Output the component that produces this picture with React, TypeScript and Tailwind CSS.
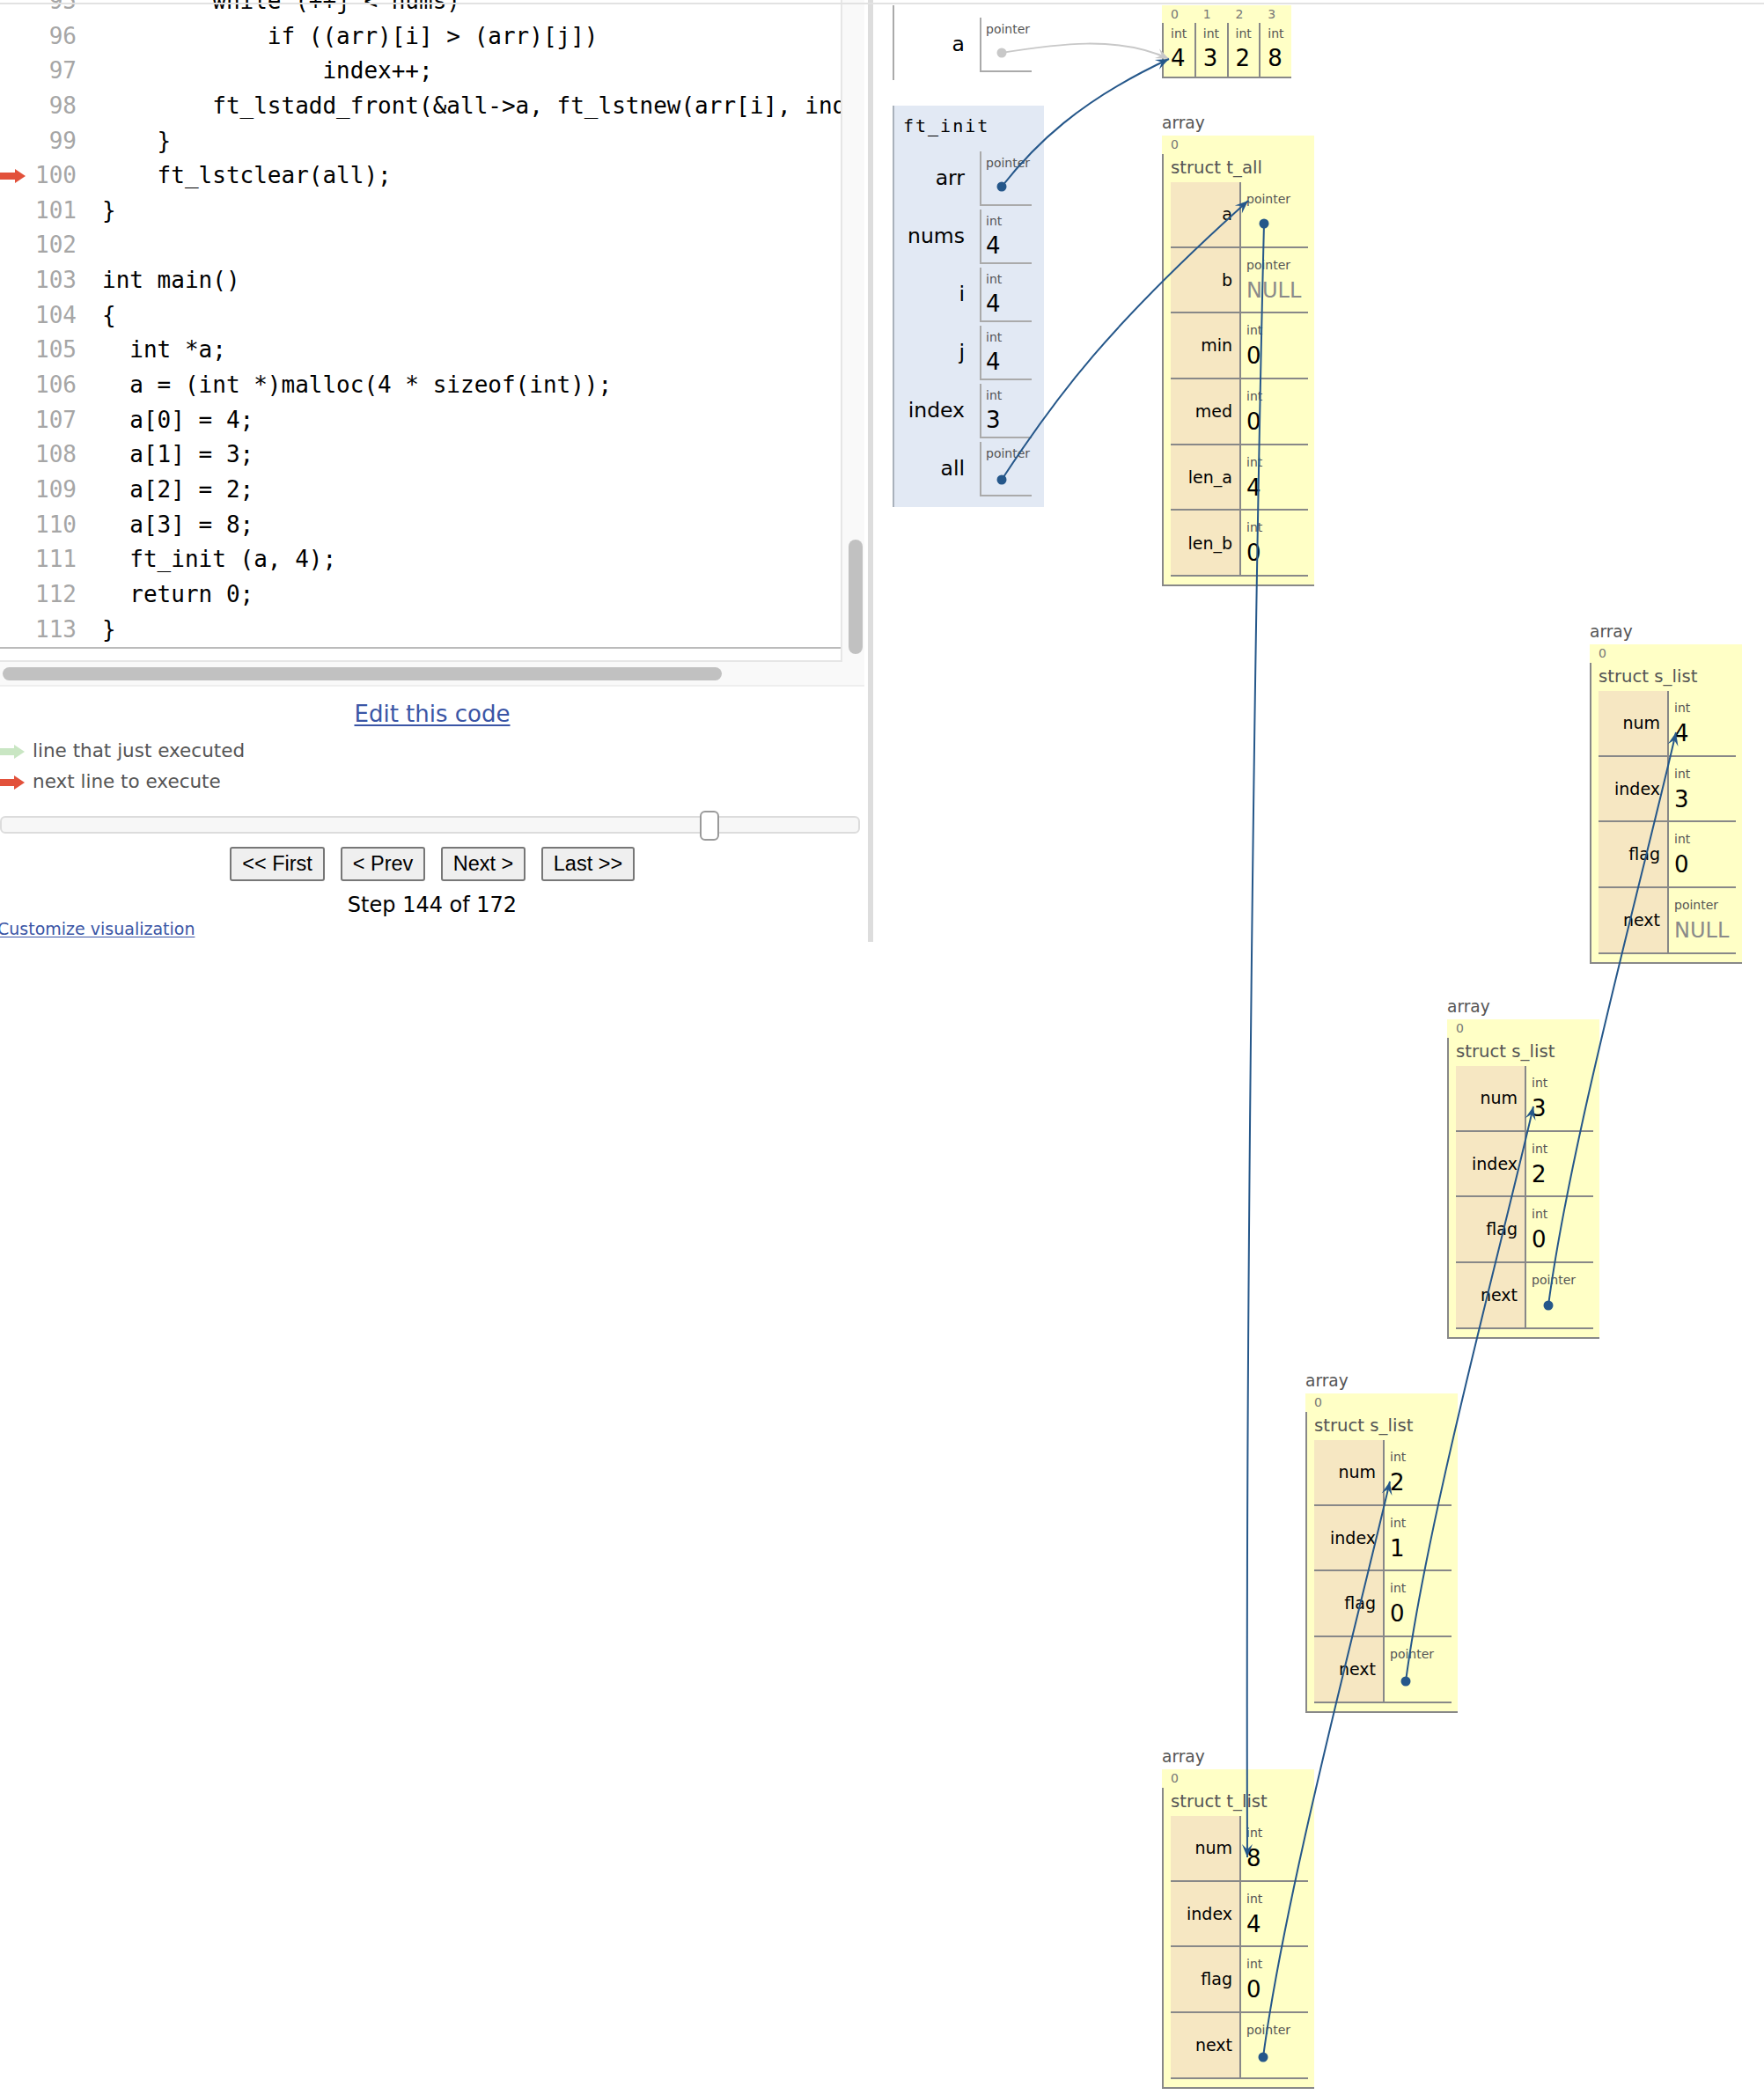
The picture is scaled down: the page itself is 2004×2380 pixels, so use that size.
import React from 'react';

const sans = "font-['DejaVu_Sans',Verdana,sans-serif]";
const mono = "font-['DejaVu_Sans_Mono',monospace]";
const BLUE = '#25578a';

const codeLines: [number, string][] = [
  [95, '        while (++j < nums)'],
  [96, '            if ((arr)[i] > (arr)[j])'],
  [97, '                index++;'],
  [98, '        ft_lstadd_front(&all->a, ft_lstnew(arr[i], index));'],
  [99, '    }'],
  [100, '    ft_lstclear(all);'],
  [101, '}'],
  [102, ''],
  [103, 'int main()'],
  [104, '{'],
  [105, '  int *a;'],
  [106, '  a = (int *)malloc(4 * sizeof(int));'],
  [107, '  a[0] = 4;'],
  [108, '  a[1] = 3;'],
  [109, '  a[2] = 2;'],
  [110, '  a[3] = 8;'],
  [111, '  ft_init (a, 4);'],
  [112, '  return 0;'],
  [113, '}'],
];

type Pt = [number, number];

const arrows: { p: [Pt, Pt, Pt, Pt]; c: string }[] = [
  { p: [[1138, 60], [1200, 50], [1270, 40], [1328, 67]], c: '#c8c8c8' },
  { p: [[1138, 212], [1175, 165], [1225, 115], [1328, 67]], c: BLUE },
  { p: [[1138, 545], [1200, 450], [1260, 370], [1418, 228]], c: BLUE },
  { p: [[1436, 254], [1425, 700], [1415, 1500], [1417, 2110]], c: BLUE },
  { p: [[1435, 2337], [1460, 2150], [1540, 1850], [1579, 1683]], c: BLUE },
  { p: [[1597, 1910], [1622, 1723], [1702, 1430], [1742, 1257]], c: BLUE },
  { p: [[1759, 1483], [1784, 1296], [1864, 1005], [1904, 832]], c: BLUE },
];

const dots: { x: number; y: number; c: string }[] = [
  { x: 1138, y: 60, c: '#c8c8c8' },
  { x: 1138, y: 212, c: BLUE },
  { x: 1138, y: 545, c: BLUE },
  { x: 1436, y: 254, c: BLUE },
  { x: 1435, y: 2337, c: BLUE },
  { x: 1597, y: 1910, c: BLUE },
  { x: 1759, y: 1483, c: BLUE },
];

function arrowHead(c2: Pt, e: Pt, len = 15, w = 12) {
  const dx = e[0] - c2[0];
  const dy = e[1] - c2[1];
  const l = Math.hypot(dx, dy) || 1;
  const ux = dx / l;
  const uy = dy / l;
  const bx = e[0] - ux * len;
  const by = e[1] - uy * len;
  const nx = -uy * (w / 2);
  const ny = ux * (w / 2);
  const notchX = e[0] - ux * len * 0.6;
  const notchY = e[1] - uy * len * 0.6;
  return `${e[0]},${e[1]} ${bx + nx},${by + ny} ${notchX},${notchY} ${bx - nx},${by - ny}`;
}

function LegendArrow({ color }: { color: string }) {
  return (
    <svg width="29" height="16" viewBox="0 0 29 16" className="block">
      <rect x="0" y="4" width="18" height="8" fill={color} />
      <polygon points="17,0 29,8 17,16" fill={color} />
    </svg>
  );
}

function FrameRow({ name, type, value }: { name: string; type: string; value?: string }) {
  return (
    <div className="flex h-[66px]">
      <div className="flex h-[62px] w-[80px] items-center justify-end text-[23.5px] text-black">{name}</div>
      <div className="ml-[17px] h-[62px] w-[59px] border-b-2 border-l-2 border-[#aaa] pl-[5px] pt-[3px]">
        <div className="text-[14px] leading-[20px] text-[#555]">{type}</div>
        {value && <div className="mt-[2px] text-[26px] leading-[32px] text-black">{value}</div>}
      </div>
    </div>
  );
}

type Field = { name: string; type: string; value?: string; isNull?: boolean };

function HeapStruct({ pos, title, fields }: { pos: string; title: string; fields: Field[] }) {
  return (
    <div className={`absolute w-[173px] ${pos}`}>
      <div className="h-[28px] text-[18.6px] leading-[28px] text-[#555]">array</div>
      <div className="bg-[#ffffc6]">
        <div className="h-[21px] pl-[10px] text-[14px] leading-[21px] text-[#777]">0</div>
        <div className="border-b-2 border-l-2 border-[#888] pb-[9px]">
          <div className="h-[32px] pl-[8px] text-[19.7px] leading-[32px] text-[#555]">{title}</div>
          <div className="ml-[8px] w-[156px]">
            {fields.map((f) => (
              <div key={f.name} className="flex h-[74.7px] border-b-2 border-[#888]">
                <div className="flex w-[78px] items-center justify-end bg-[#f6e7c2] pr-[8px] text-[19px] text-black">
                  {f.name}
                </div>
                <div className="w-[78px] border-l-2 border-[#888] pl-[6px] pt-[10px]">
                  <div className="text-[14px] leading-[18px] text-[#555]">{f.type}</div>
                  {f.value && (
                    <div
                      className={
                        f.isNull
                          ? 'mt-[5px] text-[24px] leading-[30px] text-[#8a8a8a]'
                          : 'mt-[5px] text-[26px] leading-[30px] text-black'
                      }
                    >
                      {f.value}
                    </div>
                  )}
                </div>
              </div>
            ))}
          </div>
        </div>
      </div>
    </div>
  );
}

function listFields(num: string, index: string, next?: string): Field[] {
  return [
    { name: 'num', type: 'int', value: num },
    { name: 'index', type: 'int', value: index },
    { name: 'flag', type: 'int', value: '0' },
    { name: 'next', type: 'pointer', value: next, isNull: next === 'NULL' },
  ];
}

export default function App() {
  return (
    <div className={`relative h-[2380px] w-[2004px] overflow-hidden bg-white ${sans}`}>
      <div className="flex">
        {/* left pane */}
        <div className="w-[986px] shrink-0">
          <div className="w-[982px] border-b-2 border-[#eee] bg-[#f9f9f9]">
            <div className="flex">
              <div className="h-[752px] w-[957px] shrink-0 overflow-hidden border-b-2 border-r-2 border-[#e6e6e6] bg-white">
                <div className={`-mt-[18px] w-max min-w-full border-b-2 border-[#bbb] ${mono} text-[26px]`}>
                  {codeLines.map(([n, text]) => (
                    <div key={n} className="flex h-[39.65px] items-center whitespace-pre leading-[39.65px]">
                      <div className="flex w-[40px] shrink-0 items-center">
                        {n === 100 && <LegendArrow color="#e2513b" />}
                      </div>
                      <div className="w-[47px] shrink-0 text-right text-[#a6a6a6]">{n}</div>
                      <div className="shrink-0 pl-[29px] text-black">{text}</div>
                    </div>
                  ))}
                </div>
              </div>
              <div className="h-[752px] w-[25px] shrink-0 pl-[7px] pt-[613px]">
                <div className="h-[130px] w-[16px] rounded-full bg-[#c1c1c1]" />
              </div>
            </div>
            <div className="h-[26px] pl-[3px] pt-[6px]">
              <div className="h-[15px] w-[817px] rounded-full bg-[#c1c1c1]" />
            </div>
          </div>

          <div className="w-[982px]">
            <div className="pt-[16px] text-center text-[26px] leading-[30px]">
              <span className="text-[#3a55a5] underline decoration-2 underline-offset-[3px]">Edit this code</span>
            </div>
            <div className="mt-[10px] flex h-[35px] items-center gap-[9px] text-[21.5px] text-[#555]">
              <div className="-ml-[1px]">
                <LegendArrow color="#c9e6c3" />
              </div>
              <span>line that just executed</span>
            </div>
            <div className="flex h-[35px] items-center gap-[9px] text-[21.5px] text-[#555]">
              <div className="-ml-[1px]">
                <LegendArrow color="#e2513b" />
              </div>
              <span>next line to execute</span>
            </div>
            <div className="relative mt-[21px] h-[20px] w-[977px] rounded-[6px] border-2 border-[#dcdcdc] bg-[#f7f7f7]">
              <div className="absolute left-[793px] top-[-8px] h-[34px] w-[22px] rounded-[6px] border-2 border-[#9a9a9a] bg-white" />
            </div>
            <div className="mt-[15px] flex justify-center gap-[18px] font-['Liberation_Sans',Arial,sans-serif] text-[23.5px]">
              <button className="h-[39px] w-[108px] rounded-[3px] border-2 border-[#777] bg-[#efefef] text-black">&lt;&lt; First</button>
              <button className="h-[39px] w-[96px] rounded-[3px] border-2 border-[#777] bg-[#efefef] text-black">&lt; Prev</button>
              <button className="h-[39px] w-[96px] rounded-[3px] border-2 border-[#777] bg-[#efefef] text-black">Next &gt;</button>
              <button className="h-[39px] w-[106px] rounded-[3px] border-2 border-[#777] bg-[#efefef] text-black">Last &gt;&gt;</button>
            </div>
            <div className="mt-[12px] text-center text-[24px] leading-[30px] text-black">Step 144 of 172</div>
            <div className="-ml-[3px] text-[19px] leading-[24px]">
              <span className="text-[#3a55a5] underline underline-offset-[2px]">Customize visualization</span>
            </div>
          </div>
        </div>

        {/* divider */}
        <div className="h-[1070px] w-[6px] shrink-0 bg-[#ddd]" />

        {/* stack frames */}
        <div className="pl-[22px]">
          <div className="mt-[6px] h-[85px] w-[172px] border-l-2 border-[#aaa] pt-[14px]">
            <FrameRow name="a" type="pointer" />
          </div>
          <div className="mt-[29px] w-[172px] border-l-2 border-[#a9b1bb] bg-[#e2e9f4] pb-[8px] pt-[10px]">
            <div className={`mb-[16px] pl-[10px] text-[20px] leading-[26px] tracking-[2px] text-black ${mono}`}>ft_init</div>
            <FrameRow name="arr" type="pointer" />
            <FrameRow name="nums" type="int" value="4" />
            <FrameRow name="i" type="int" value="4" />
            <FrameRow name="j" type="int" value="4" />
            <FrameRow name="index" type="int" value="3" />
            <FrameRow name="all" type="pointer" />
          </div>
        </div>
      </div>

      {/* top rule */}
      <div className="absolute left-0 top-[3px] h-[2px] w-full bg-[#e2e2e2]" />

      {/* heap: int array */}
      <div className="absolute left-[1320px] top-[6px] w-[147px] bg-[#ffffc6]">
        <div className="flex h-[20px]">
          {['0', '1', '2', '3'].map((i) => (
            <div key={i} className="w-[36.75px] pl-[10px] text-[14px] leading-[20px] text-[#777]">{i}</div>
          ))}
        </div>
        <div className="flex border-b-2 border-[#888]">
          {['4', '3', '2', '8'].map((v, i) => (
            <div key={i} className="h-[61px] w-[36.75px] border-l-2 border-[#888] pl-[8px] pt-[3px]">
              <div className="text-[14px] leading-[19px] text-[#555]">int</div>
              <div className="mt-[3px] text-[26px] leading-[30px] text-black">{v}</div>
            </div>
          ))}
        </div>
      </div>

      <HeapStruct
        pos="left-[1320px] top-[126px]"
        title="struct t_all"
        fields={[
          { name: 'a', type: 'pointer' },
          { name: 'b', type: 'pointer', value: 'NULL', isNull: true },
          { name: 'min', type: 'int', value: '0' },
          { name: 'med', type: 'int', value: '0' },
          { name: 'len_a', type: 'int', value: '4' },
          { name: 'len_b', type: 'int', value: '0' },
        ]}
      />
      <HeapStruct pos="left-[1806px] top-[704px]" title="struct s_list" fields={listFields('4', '3', 'NULL')} />
      <HeapStruct pos="left-[1644px] top-[1130px]" title="struct s_list" fields={listFields('3', '2')} />
      <HeapStruct pos="left-[1483px] top-[1555px]" title="struct s_list" fields={listFields('2', '1')} />
      <HeapStruct pos="left-[1320px] top-[1982px]" title="struct t_list" fields={listFields('8', '4')} />

      {/* pointer arrows */}
      <svg className="pointer-events-none absolute left-0 top-0" width="2004" height="2380" viewBox="0 0 2004 2380">
        {arrows.map((a, i) => {
          const [s, c1, c2, e] = a.p;
          return (
            <g key={i}>
              <path
                d={`M${s[0]},${s[1]} C${c1[0]},${c1[1]} ${c2[0]},${c2[1]} ${e[0]},${e[1]}`}
                fill="none"
                stroke={a.c}
                strokeWidth="2"
              />
              <polygon points={arrowHead(c2, e)} fill={a.c} />
            </g>
          );
        })}
        {dots.map((d, i) => (
          <circle key={i} cx={d.x} cy={d.y} r="5.5" fill={d.c} />
        ))}
      </svg>
    </div>
  );
}
